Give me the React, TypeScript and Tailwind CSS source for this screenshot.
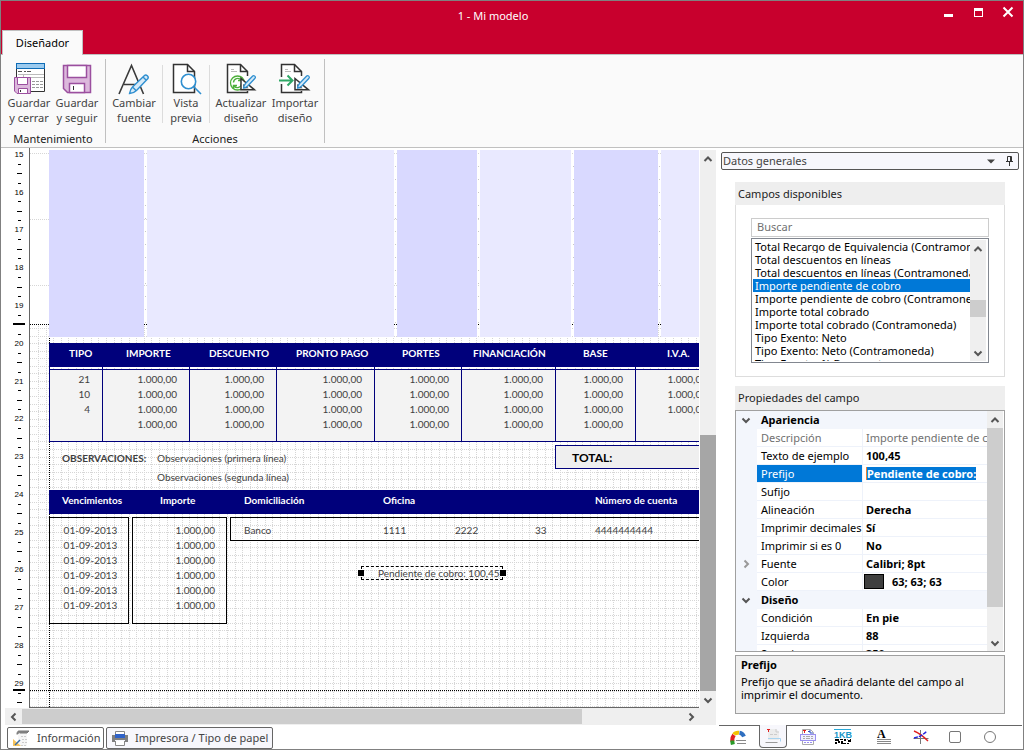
import type { ReactNode } from 'react'
import clsx from 'clsx'

const COLUMNAS = [
  { titulo: 'TIPO', th: 'pl-5', w: 'w-[53px]' },
  { titulo: 'IMPORTE', th: 'pl-6', w: 'w-[87px]' },
  { titulo: 'DESCUENTO', th: 'pl-5', w: 'w-[87px]' },
  { titulo: 'PRONTO PAGO', th: 'pl-5', w: 'w-[98px]' },
  { titulo: 'PORTES', th: 'pl-7', w: 'w-[87px]' },
  { titulo: 'FINANCIACIÓN', th: 'pl-3', w: 'w-[94px]' },
  { titulo: 'BASE', th: 'pl-7', w: 'w-[80px]' },
  { titulo: 'I.V.A.', th: 'pl-8', w: 'w-[84px]' },
]

const M = '1.000,00'
const FILAS = [
  ['21', M, M, M, M, M, M, M],
  ['10', M, M, M, M, M, M, M],
  ['4', M, M, M, M, M, M, M],
  ['', M, M, M, M, M, M, ''],
]

const CAMPOS = [
  'Total Recargo de Equivalencia (Contramoneda)',
  'Total descuentos en líneas',
  'Total descuentos en líneas (Contramoneda)',
  'Importe pendiente de cobro',
  'Importe pendiente de cobro (Contramoneda)',
  'Importe total cobrado',
  'Importe total cobrado (Contramoneda)',
  'Tipo Exento: Neto',
  'Tipo Exento: Neto (Contramoneda)',
  'Tipo Exento: % Descuento',
]

interface Propiedad {
  nombre: string
  valor?: string
  tipo?: 'grupo' | 'lectura' | 'activa' | 'expandible' | 'color'
}

const PROPIEDADES: Propiedad[] = [
  { nombre: 'Apariencia', tipo: 'grupo' },
  { nombre: 'Descripción', valor: 'Importe pendiente de cobro', tipo: 'lectura' },
  { nombre: 'Texto de ejemplo', valor: '100,45' },
  { nombre: 'Prefijo', valor: 'Pendiente de cobro: ', tipo: 'activa' },
  { nombre: 'Sufijo', valor: '' },
  { nombre: 'Alineación', valor: 'Derecha' },
  { nombre: 'Imprimir decimales', valor: 'Sí' },
  { nombre: 'Imprimir si es 0', valor: 'No' },
  { nombre: 'Fuente', valor: 'Calibri; 8pt', tipo: 'expandible' },
  { nombre: 'Color', valor: '63; 63; 63', tipo: 'color' },
  { nombre: 'Diseño', tipo: 'grupo' },
  { nombre: 'Condición', valor: 'En pie' },
  { nombre: 'Izquierda', valor: '88' },
  { nombre: 'Superior', valor: '350' },
]

const DIRECCION = {
  arriba: 'M1.5 7 5 3.5 8.5 7',
  abajo: 'M1.5 3.5 5 7 8.5 3.5',
  izquierda: 'M6.5 1.5 3 5l3.5 3.5',
  derecha: 'M3.5 1.5 7 5 3.5 8.5',
}

function Flecha({ hacia, className = 'text-[#555]' }: { hacia: keyof typeof DIRECCION; className?: string }) {
  return (
    <svg width="10" height="10" viewBox="0 0 10 10" fill="none" stroke="currentColor" strokeWidth="2" className={className}>
      <path d={DIRECCION[hacia]} />
    </svg>
  )
}

/* ---------- Iconos de la cinta ---------- */

function IconoGuardarCerrar() {
  return (
    <svg width="32" height="32" viewBox="0 0 32 32" fill="none">
      <path d="M3.500 5v23.500h28V5" fill="#fff" stroke="#333" />
      <rect x="3.500" y=".5" width="28" height="5" fill="#9ccbef" stroke="#0f6cb6" />
      <path d="M5 8.500h4M11 8.500h2M14 8.500h4" stroke="#555" />
      <path d="M5 11.500h26M10.500 11v4M11 14.500h20" stroke="#bbb" />
      <path d="M19 18.500h3M23 18.500h3M27 18.500h3M19 21.500h3M23 21.500h3M27 21.500h3M19 24.500h3M23 24.500h3M27 24.500h3" stroke="#999" />
      <path d="M1.500 14.500h16v16H4l-2.500-2.500Z" fill="#dcb8dc" stroke="#9b4f9f" />
      <path d="M4.500 14.500h10v7h-10ZM5.500 25.500h9v5h-9Z" fill="#fff" stroke="#9b4f9f" />
      <path d="M7.500 27v2" stroke="#333" />
    </svg>
  )
}

function IconoGuardar() {
  return (
    <svg width="32" height="32" viewBox="0 0 32 32" fill="none">
      <path d="M2.500 2.500h27v27H6.500l-4-4Z" fill="#dcb8dc" stroke="#9b4f9f" strokeWidth="1.500" />
      <path d="M6.500 2.500h19v12h-19ZM8.500 20.500h15v9h-15Z" fill="#fff" stroke="#9b4f9f" strokeWidth="1.500" />
      <path d="M12.500 23v4" stroke="#333" />
    </svg>
  )
}

function IconoFuente() {
  return (
    <svg width="32" height="32" viewBox="0 0 32 32" fill="none">
      <path d="M1 31 13.500 2.500 25.500 31M6 21.500h15" stroke="#3a3a3a" strokeWidth="1.600" />
      <path d="M11.500 30.500c.5-3 1.500-5 3-6.500L26.500 12.500c1.500-1.500 5 1 3.200 3.200L18.500 27.500c-2 2-4.500 3-7 3ZM25 14l3 3M14.500 24l3.500 3.500" fill="#d6eaf8" stroke="#2f8fd0" strokeWidth="1.400" />
    </svg>
  )
}

function IconoVista() {
  return (
    <svg width="32" height="32" viewBox="0 0 32 32" fill="none">
      <path d="M3.500 1.500h14l7 7v21h-21Z" fill="#fff" stroke="#333" strokeWidth="1.500" />
      <path d="M17.500 1.500v7h7" stroke="#333" strokeWidth="1.500" />
      <circle cx="18.500" cy="18.500" r="7.200" fill="#fff" stroke="#2f8fd0" strokeWidth="1.600" />
      <path d="m23.500 23.500 7.500 7.500" stroke="#2f8fd0" strokeWidth="1.600" />
    </svg>
  )
}

function HojaConEscuadra({ children }: { children: ReactNode }) {
  return (
    <svg width="32" height="32" viewBox="0 0 32 32" fill="none">
      <path d="M2.500 1.500h13l7 7v21h-20Z" fill="#fff" />
      <path d="M22.500 13V8.500l-7-7h-13V29.500h20V28" stroke="#333" strokeWidth="1.500" />
      <path d="M15.500 1.500v7h7" stroke="#333" strokeWidth="1.500" />
      <path d="M6 6.500h3M6 8.500h6" stroke="#bbb" />
      {children}
      <path d="M16 15.500v11.300h13.500ZM19 22.500v2h2.500Z" fill="#fff" stroke="#333" strokeWidth="1.500" />
      <path d="M18.500 25c.3-2 1-3.500 2.200-4.700l7-7.300c1.200-1.200 3.500.8 2.300 2.200l-7 7.600c-1.200 1.200-2.700 2-4.500 2.200Z" fill="#d6eaf8" stroke="#2f8fd0" strokeWidth="1.300" />
    </svg>
  )
}

function IconoActualizar() {
  return (
    <HojaConEscuadra>
      <circle cx="12.500" cy="20" r="7" fill="#fff" stroke="#4caf3a" strokeWidth="1.300" />
      <path d="M8.500 19.500a4.200 4.200 0 0 1 7.500-2.500M16.500 13.800V17.500h-3.500M16.500 20.500a4.200 4.200 0 0 1-7.500 2.500M8.500 26v-3.500H12" stroke="#4caf3a" strokeWidth="1.400" />
    </HojaConEscuadra>
  )
}

function IconoImportar() {
  return (
    <HojaConEscuadra>
      <path d="M1 14v7h3v-7Z" fill="#fafafa" />
      <path d="M0 17.500h13M8.500 12.500l5 5-5 5" stroke="#2fa866" strokeWidth="2" />
    </HojaConEscuadra>
  )
}

function BotonCinta({ icono, lineas, ancho }: { icono: ReactNode; lineas: [string, string]; ancho: string }) {
  return (
    <button className={clsx('flex flex-col items-center text-[#444] leading-[15px]', ancho)}>
      {icono}
      <span className="whitespace-nowrap">{lineas[0]}</span>
      <span className="whitespace-nowrap">{lineas[1]}</span>
    </button>
  )
}

function Cinta() {
  return (
    <div className="flex h-[93px] shrink-0 border-b border-[#c0c0c0] bg-[#fafafa]">
      <section className="flex w-[104px] flex-col justify-between pt-2">
        <div className="flex pl-1">
          <BotonCinta icono={<IconoGuardarCerrar />} lineas={['Guardar', 'y cerrar']} ancho="w-12" />
          <BotonCinta icono={<IconoGuardar />} lineas={['Guardar', 'y seguir']} ancho="w-12" />
        </div>
        <h2 className="text-center leading-4 text-[#222]">Mantenimiento</h2>
      </section>
      <div className="my-1 w-px bg-[#c0c0c0]" />
      <section className="flex w-[218px] flex-col justify-between pt-2">
        <div className="flex">
          <BotonCinta icono={<IconoFuente />} lineas={['Cambiar', 'fuente']} ancho="w-14" />
          <div className="my-0.5 w-px bg-[#dcdcdc]" />
          <BotonCinta icono={<IconoVista />} lineas={['Vista', 'previa']} ancho="w-[46px]" />
          <div className="my-0.5 w-px bg-[#dcdcdc]" />
          <BotonCinta icono={<IconoActualizar />} lineas={['Actualizar', 'diseño']} ancho="w-[62px]" />
          <BotonCinta icono={<IconoImportar />} lineas={['Importar', 'diseño']} ancho="w-[46px]" />
        </div>
        <h2 className="text-center leading-4 text-[#222]">Acciones</h2>
      </section>
      <div className="my-1 w-px bg-[#c0c0c0]" />
    </div>
  )
}

/* ---------- Lienzo ---------- */

function Regla() {
  const numeros = Array.from({ length: 15 }, (_, i) => 15 + i)
  return (
    <div className="relative w-7 shrink-0 overflow-hidden pl-2 pt-0.5">
      <div className="flex h-[567px] flex-col">
        {numeros.map(n => (
          <div key={n} className="grid flex-1 grid-rows-4 place-items-center">
            <span className="h-2 font-['Liberation_Sans'] text-[8px] leading-[8px] text-black">{n}</span>
            <span className="h-px w-[3px] bg-black" />
            <span className="h-px w-[5px] bg-black" />
            <span className="h-px w-[3px] bg-black" />
          </div>
        ))}
      </div>
      {/* límites de sección */}
      <span className="absolute left-3 top-[175px] h-0.5 w-3 bg-black" />
      <span className="absolute left-3 top-[541px] h-0.5 w-3 bg-black" />
    </div>
  )
}

const PASO = 7.56

function Cuadricula() {
  const verticales = Array.from({ length: 120 }, (_, i) => Math.round(8 + i * PASO) + 0.5)
  const horizontales = Array.from({ length: 60 }, (_, i) => Math.round(180 + i * PASO) + 0.5)
  return (
    <svg className="absolute inset-0 size-full" shapeRendering="crispEdges" aria-hidden="true">
      <g stroke="#d6d6d6" strokeDasharray="1 1">
        {[5.5, 71.5, 137.5].map(y => <line key={y} x1="0" x2="100%" y1={y} y2={y} />)}
        {horizontales.map(y => <line key={y} x1="0" x2="100%" y1={y} y2={y} />)}
        {verticales.map(x => <line key={x} x1={x} x2={x} y1="178" y2="100%" />)}
      </g>
      <g stroke="#c8c8c8" strokeDasharray="1 12">
        {[115.5, 365.5, 448.5, 543.5, 629.5].map(x => <line key={x} x1={x} x2={x} y1="18" y2="176" />)}
      </g>
      <g stroke="#000" strokeDasharray="1 1">
        <line x1="0" x2="100%" y1="176.5" y2="176.5" />
        <line x1="0" x2="100%" y1="542.5" y2="542.5" />
        <line x1="19.5" x2="19.5" y1="188" y2="100%" />
      </g>
    </svg>
  )
}

function TablaImpuestos() {
  return (
    <table className="w-[670px] table-fixed border-separate border-spacing-0">
      <thead>
        <tr className="h-6 bg-[#00007b] text-left text-white">
          {COLUMNAS.map(c => (
            <th key={c.titulo} className={clsx('p-0 pb-1 font-bold', c.th, c.w)}>{c.titulo}</th>
          ))}
        </tr>
      </thead>
      <tbody>
        <tr aria-hidden="true" className="h-0.5">
          {COLUMNAS.map(c => <td key={c.titulo} className="border-l border-[#00007b] p-0" />)}
        </tr>
        {FILAS.map((fila, i) => (
          <tr key={i} className="bg-[#f3f3f3]">
            {fila.map((valor, j) => (
              <td
                key={j}
                className={clsx(
                  'border-l border-[#00007b] p-0 pr-3 text-right leading-[15px]',
                  i === 0 && 'border-t pt-0.5',
                  i === FILAS.length - 1 && 'border-b pb-[9px]',
                )}
              >
                {valor}
              </td>
            ))}
          </tr>
        ))}
      </tbody>
    </table>
  )
}

function Vencimientos() {
  const seis = Array.from({ length: 6 }, (_, i) => i)
  return (
    <>
      <div className="flex h-6 items-center bg-[#00007b] pb-1 pl-[13px] font-bold text-white">
        <span className="w-[98px]">Vencimientos</span>
        <span className="w-[84px]">Importe</span>
        <span className="w-[139px]">Domiciliación</span>
        <span className="w-[212px]">Oficina</span>
        <span>Número de cuenta</span>
      </div>
      <div className="mt-[3px] flex items-start gap-[3px] leading-[15px]">
        <ul className="h-[107px] w-20 border border-black pl-[3px] pt-[5px] text-center">
          {seis.map(i => <li key={i}>01-09-2013</li>)}
        </ul>
        <ul className="h-[107px] w-[95px] border border-black pr-[11px] pt-[5px] text-right">
          {seis.map(i => <li key={i}>{M}</li>)}
        </ul>
        <div className="flex h-6 flex-1 border border-r-0 border-black pl-[13px] pt-[5px]">
          <span className="w-[139px]">Banco</span>
          <span className="w-[72px]">1111</span>
          <span className="w-20">2222</span>
          <span className="w-[60px]">33</span>
          <span>4444444444</span>
        </div>
      </div>
    </>
  )
}

function Lienzo() {
  return (
    <div className="relative min-w-0 flex-1 overflow-hidden border-b border-l border-[#666] bg-white font-['Lato',sans-serif] text-[10px] text-[#3f3f3f]">
      <Cuadricula />
      <div className="relative ml-[19px] w-[670px] pt-0.5">
        <div className="flex h-[187px] gap-[3px]">
          <div className="w-[95px] bg-[#d9d9ff]" />
          <div className="w-[247px] bg-[#e9e9ff]" />
          <div className="w-20 bg-[#d9d9ff]" />
          <div className="w-[91px] bg-[#e9e9ff]" />
          <div className="w-[84px] bg-[#d9d9ff]" />
          <div className="flex-1 bg-[#e9e9ff]" />
        </div>
        <div className="mt-1.5">
          <TablaImpuestos />
        </div>
        <div className="flex h-12 pl-[13px]">
          <span className="w-[95px] pt-[9px] font-bold leading-[14px]">OBSERVACIONES:</span>
          <div className="flex-1 pt-[7px] leading-[19px]">
            <p>Observaciones (primera línea)</p>
            <p>Observaciones (segunda línea)</p>
          </div>
          <div className="mt-[3px] h-6 w-[164px] border border-[#00007b] bg-[#efefef] pl-4 text-xs font-bold leading-6 text-black">
            TOTAL:
          </div>
        </div>
        <Vencimientos />
      </div>

      {/* campo seleccionado */}
      <div className="absolute left-[331px] top-[418px] h-[14px] w-[142px]">
        <div className="h-full overflow-hidden whitespace-nowrap border border-dashed border-black pl-4 leading-3">
          Pendiente de cobro: 100,45
        </div>
        <span className="absolute -left-[3px] top-1 size-1.5 bg-black" />
        <span className="absolute -right-[3px] top-1 size-1.5 bg-black" />
      </div>
    </div>
  )
}

function Disenador() {
  return (
    <div className="flex min-w-0 flex-1 flex-col">
      <div className="flex min-h-0 flex-1">
        <Regla />
        <Lienzo />
        <div className="ml-px mt-0.5 flex w-4 flex-col items-center bg-[#efefef]">
          <button className="grid h-[17px] w-full place-items-center" aria-label="Subir"><Flecha hacia="arriba" /></button>
          <div className="flex w-full flex-1 flex-col justify-end">
            <div className="h-64 w-full bg-[#a6a6a6]" />
          </div>
          <button className="grid h-[17px] w-full place-items-center" aria-label="Bajar"><Flecha hacia="abajo" /></button>
        </div>
      </div>
      <div className="ml-1 flex h-[17px] shrink-0 items-stretch bg-[#efefef]">
        <button className="grid w-[17px] place-items-center" aria-label="Izquierda"><Flecha hacia="izquierda" /></button>
        <div className="my-px w-[560px] bg-[#cdcdcd]" />
        <button className="ml-auto mr-[17px] grid w-[17px] place-items-center" aria-label="Derecha"><Flecha hacia="derecha" /></button>
      </div>
      <div className="flex h-6 shrink-0 items-end gap-0.5 pl-1.5 text-[#444]">
        <button className="flex h-[22px] w-[97px] items-center gap-[7px] rounded-xs border border-[#666] bg-white pl-1">
          <svg width="18" height="18" viewBox="0 0 18 18" fill="none">
            <path d="M6 4h9v13H6z" fill="#f6f6f6" />
            <path d="M5 5.500V4.200C5.500 2.500 6 2 7 2h10l-2 2H8" fill="#888" stroke="#777" />
            <path d="M9 7.500h5M10 10.500h5M10 13.500h5M9 16.500h6" stroke="#ccc" strokeDasharray="2 1" />
            <path d="M1 10v7h8Z" fill="#f6c35b" />
            <path d="m3 16 5-5" stroke="#3a6fa8" strokeWidth="1.500" />
          </svg>
          Información
        </button>
        <button className="flex h-[22px] w-[167px] items-center gap-1.5 rounded-xs border border-[#666] bg-[#f7f7fc] pl-1">
          <svg width="18" height="18" viewBox="0 0 18 18" fill="none">
            <path d="M4.500 6V2.500h9V6M4.500 12v4.500h9V12" fill="#fff" stroke="#888" />
            <path d="M1 6h3v3h10V6h3v7h-3v-2H4v2H1Z" fill="#808080" />
            <path d="M4 5h10v4H4z" fill="#2f62c8" />
          </svg>
          Impresora / Tipo de papel
        </button>
      </div>
    </div>
  )
}

/* ---------- Panel derecho ---------- */

function CamposDisponibles() {
  return (
    <section className="mt-3">
      <h3 className="h-[23px] bg-[#eee] pl-[3px] leading-6">Campos disponibles</h3>
      <div className="border border-t-0 border-[#ddd] px-[15px] pb-[13px] pt-[13px]">
        <input
          type="text"
          placeholder="Buscar"
          aria-label="Buscar campo"
          className="block h-[19px] w-full border border-[#ccc] pb-0.5 pl-[5px] placeholder:text-[#707070]"
        />
        <div className="mt-px flex h-[125px] border border-[#828790] p-px pr-0.5">
          <ul role="listbox" aria-label="Campos" className="min-w-0 flex-1 overflow-hidden leading-[13px] text-black">
            {CAMPOS.map(campo => {
              const activo = campo === 'Importe pendiente de cobro'
              return (
                <li
                  key={campo}
                  role="option"
                  aria-selected={activo}
                  className={clsx('overflow-hidden whitespace-nowrap pl-0.5', activo && 'bg-[#0078d7] text-white')}
                >
                  {campo}
                </li>
              )
            })}
          </ul>
          <div className="flex w-4 shrink-0 flex-col items-center bg-[#efefef]">
            <button className="grid h-[17px] place-items-center" aria-label="Subir"><Flecha hacia="arriba" /></button>
            <div className="flex w-full flex-1 flex-col justify-center pt-4">
              <div className="h-[17px] w-full bg-[#cdcdcd]" />
            </div>
            <button className="grid h-[17px] place-items-center" aria-label="Bajar"><Flecha hacia="abajo" /></button>
          </div>
        </div>
      </div>
    </section>
  )
}

function FilaPropiedad({ p }: { p: Propiedad }) {
  if (p.tipo === 'grupo') {
    return (
      <tr className="h-[18px] bg-[#f3f6fc]">
        <td className="p-0 pl-[5px]"><Flecha hacia="abajo" /></td>
        <th colSpan={2} className="p-0 pb-px pl-1 text-left font-bold leading-4">{p.nombre}</th>
      </tr>
    )
  }
  const activa = p.tipo === 'activa'
  const lectura = p.tipo === 'lectura'
  return (
    <tr className={clsx('h-[18px]', lectura && 'text-[#707070]')}>
      <td className="bg-[#f3f6fc] p-0 pl-[5px]">
        {p.tipo === 'expandible' && <Flecha hacia="derecha" className="text-[#999]" />}
      </td>
      <th
        className={clsx(
          'whitespace-nowrap border-b border-r border-[#eef2fa] p-0 pl-1 text-left font-normal leading-[17px]',
          activa && 'bg-[#0078d7] text-white',
        )}
      >
        {p.nombre}
      </th>
      <td
        className={clsx(
          'overflow-hidden whitespace-nowrap border-b border-[#eef2fa] p-0 pl-[3px] leading-[17px]',
          !lectura && 'font-bold',
        )}
      >
        {activa ? (
          <input
            type="text"
            aria-label={p.nombre}
            defaultValue={p.valor}
            className="block h-[13px] w-[110px] border-l border-[#f08030] bg-[#0078d7] text-white"
          />
        ) : p.tipo === 'color' ? (
          <span className="-ml-0.5 flex items-center gap-2">
            <span className="h-[15px] w-5 border border-black bg-[#3f3f3f]" />
            {p.valor}
          </span>
        ) : (
          p.valor
        )}
      </td>
    </tr>
  )
}

function PropiedadesCampo() {
  return (
    <section className="mt-[9px]">
      <h3 className="h-6 bg-[#eee] pl-[3px] leading-6">Propiedades del campo</h3>
      <div className="flex h-[242px] overflow-hidden border border-[#a0a0a0] pr-px text-black">
        <div className="min-w-0 flex-1 overflow-hidden">
          <table className="w-full table-fixed border-separate border-spacing-0">
            <colgroup>
              <col className="w-[21px]" />
              <col className="w-[106px]" />
              <col />
            </colgroup>
            <tbody>
              {PROPIEDADES.map(p => <FilaPropiedad key={p.nombre} p={p} />)}
            </tbody>
          </table>
        </div>
        <div className="flex w-4 shrink-0 flex-col items-center bg-[#efefef]">
          <button className="grid h-[17px] place-items-center" aria-label="Subir"><Flecha hacia="arriba" /></button>
          <div className="h-[179px] w-full bg-[#cdcdcd]" />
          <button className="mt-auto grid h-[17px] place-items-center" aria-label="Bajar"><Flecha hacia="abajo" /></button>
        </div>
      </div>
      <div className="mt-[3px] h-[59px] border border-[#a0a0a0] bg-[#f0f0f0] px-[5px] pt-px leading-[13px] text-black">
        <p className="mb-[3px] font-bold leading-[15px]">Prefijo</p>
        <p>Prefijo que se añadirá delante del campo al imprimir el documento.</p>
      </div>
    </section>
  )
}

function Herramientas() {
  const boton = 'grid h-[22px] w-7 place-items-center'
  return (
    <div className="ml-[3px] mr-px mt-auto flex h-6 shrink-0 items-start border-t border-[#666] pl-[5px]">
      <button className={boton} aria-label="Datos">
        <svg width="16" height="16" viewBox="0 0 16 16" fill="none" strokeWidth="4">
          <path d="M2.500 12.500C2 10 2.500 8 4 6" stroke="#e02020" />
          <path d="M2.300 11.500c0 1.500.2 2.500.6 4" stroke="#2a9a2a" />
          <path d="M4 5.500c1-1.500 3-2 5-1.800" stroke="#f2c200" />
          <path d="M9.500 3.800c2 .3 3.500 1.500 4.500 3.700" stroke="#2f6fc0" />
          <path d="M6 11.500h10M7 14.500h9" stroke="#888" strokeWidth="1" />
        </svg>
      </button>
      <button className="-mt-px ml-[7px] grid h-[23px] w-7 place-items-center rounded-b border border-t-0 border-[#666] bg-[#f7f7fc]" aria-label="Datos generales">
        <svg width="16" height="16" viewBox="0 0 16 16" fill="none">
          <path d="M3 1h8l3 3v8H3z" fill="#ececec" />
          <path d="M11 1v3h3" stroke="#ccc" />
          <path d="M2 1.500h3M3.500 1v3" stroke="#e02020" />
          <path d="M5 6.500h3M9 6.500h3" stroke="#ccc" />
          <path d="M3 10.500h12.500v3" stroke="#a8d4f0" />
          <path d="M.5 14.500h12" stroke="#999" />
        </svg>
      </button>
      <button className={clsx(boton, 'ml-[7px]')} aria-label="Líneas">
        <svg width="16" height="16" viewBox="0 0 16 16" fill="none">
          <path d="M2.500.5h8l3 3v12h-11Z" fill="#fff" stroke="#aaa" />
          <path d="M3 1.500h3M4.500 1v3" stroke="#e02020" />
          <path d="M8 2.500h2M10 1v3h3" stroke="#3050c0" />
          <rect x=".5" y="5.500" width="15" height="6" fill="#f0efff" stroke="#9a90f0" />
          <path d="M3 7.500h2M6 7.500h4M11 7.500h2M3 9.500h2M6 9.500h4M11 9.500h2" stroke="#aaa" />
          <path d="M4 13.500h8" stroke="#9a90f0" strokeDasharray="2 1" />
        </svg>
      </button>
      <button className={clsx(boton, 'ml-[7px]')} aria-label="Código de barras">
        <svg width="18" height="16" viewBox="0 0 18 16" fill="none">
          <path d="M0 .5h17" stroke="#2aa9d8" />
          <text x="0" y="9" fontFamily="Liberation Sans" fontSize="9" fontWeight="bold" fill="#1a96c8">1KB</text>
          <path d="M1 10h4v2H1zM1 13h2v2H1zM4 12h2v2H4zM6 10h3v1H6zM7 12h2v3H7zM10 10h2v2h-2zM9 14h3v1H9zM13 10h1v3h3v-3h-1v1h-2zM13 14h2v1h-2z" fill="#000" />
        </svg>
      </button>
      <button className={clsx(boton, 'ml-[13px]')} aria-label="Texto">
        <svg width="16" height="16" viewBox="0 0 16 16" fill="none">
          <text x="1" y="9" fontFamily="Liberation Serif" fontSize="12" fontWeight="bold" fill="#000">A</text>
          <path d="M1 10.500h14M1 12.500h14M1 14.500h14" stroke="#888" />
        </svg>
      </button>
      <button className={clsx(boton, 'ml-[9px]')} aria-label="Línea">
        <svg width="16" height="16" viewBox="0 0 16 16" fill="none">
          <path d="M7.500 1v14M.5 9.500h15" stroke="#777" />
          <path d="M1 2c5 2 9 5 14 10" stroke="#e02020" strokeWidth="1.400" />
          <path d="M1 9c5-1 9-3 13-7" stroke="#2020e0" strokeWidth="1.400" strokeDasharray="4 1" />
        </svg>
      </button>
      <button className={clsx(boton, 'ml-1.5')} aria-label="Rectángulo">
        <span className="size-3 rounded-xs border border-[#777]" />
      </button>
      <button className={clsx(boton, 'ml-[7px]')} aria-label="Elipse">
        <span className="size-3 rounded-full border border-[#777]" />
      </button>
    </div>
  )
}

function PanelDatos() {
  return (
    <aside className="flex w-[307px] shrink-0 flex-col pt-1 text-[#222]">
      <div className="ml-[5px] mr-1 flex h-[18px] shrink-0 items-center rounded-xs border border-[#555] bg-[#f7f7fc] pl-px pr-1 text-[#444]">
        <h2 className="flex-1">Datos generales</h2>
        <button aria-label="Opciones" className="mr-2.5">
          <svg width="8" height="5" viewBox="0 0 8 5"><path d="M0 .5h8L4 4.500Z" fill="#444" /></svg>
        </button>
        <button aria-label="Anclar">
          <svg width="9" height="10" viewBox="0 0 9 10" fill="none" stroke="#333">
            <path d="M2.500 5.500v-5h4v5M5.500 1v5M1 5.500h7M4.500 6v4" />
          </svg>
        </button>
      </div>
      <div className="ml-[19px] mr-[18px]">
        <CamposDisponibles />
        <PropiedadesCampo />
      </div>
      <Herramientas />
    </aside>
  )
}

export default function App() {
  return (
    <div className="flex h-screen flex-col overflow-hidden border border-[#808080] bg-white font-['Noto_Sans',sans-serif] text-[11px]">
      <header className="flex h-[54px] shrink-0 flex-col justify-between border-b border-[#c0c0c0] bg-[#c8002d] text-white">
        <div className="flex h-[29px] items-center pr-2">
          <h1 className="flex-1 pl-11 pt-0.5 text-center">1 - Mi modelo</h1>
          <div className="flex items-center gap-4 pb-2">
            <button aria-label="Minimizar">
              <svg width="14" height="14" viewBox="0 0 14 14"><path d="M3 9h9v3H3z" fill="#fff" /></svg>
            </button>
            <button aria-label="Maximizar">
              <svg width="14" height="14" viewBox="0 0 14 14"><path d="M3 3h9v9H3zM4 6v5h7V6z" fill="#fff" fillRule="evenodd" /></svg>
            </button>
            <button aria-label="Cerrar">
              <svg width="14" height="14" viewBox="0 0 14 14"><path d="m2.500 2.500 9 9m0-9-9 9" stroke="#fff" strokeWidth="2" /></svg>
            </button>
          </div>
        </div>
        <nav className="-mb-px flex pl-px">
          <button className="h-[25px] w-[81px] border border-b-0 border-[#c0c0c0] bg-[#fafafa] text-black">Diseñador</button>
        </nav>
      </header>
      <Cinta />
      <main className="flex min-h-0 flex-1">
        <Disenador />
        <PanelDatos />
      </main>
    </div>
  )
}
